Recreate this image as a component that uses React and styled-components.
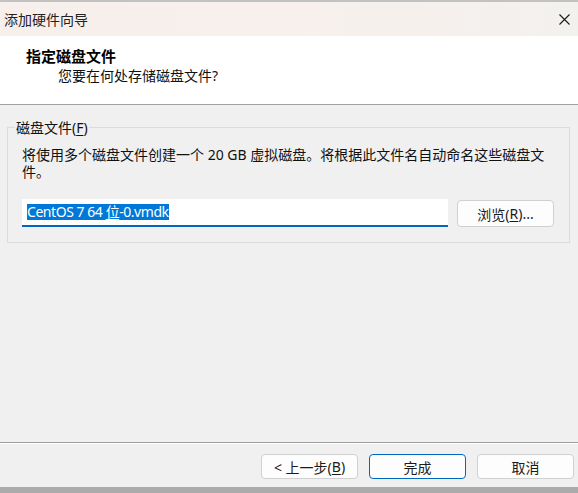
import React from "react";
import styled, { createGlobalStyle } from "styled-components";

const GlobalStyle = createGlobalStyle`
  html, body { margin: 0; padding: 0; }
  body {
    background: #ababab;
    font-family: "Noto Sans", "Noto Sans CJK SC", sans-serif;
    color: #1b1b1b;
  }
`;

const Window = styled.div`
  width: 578px;
  height: 487px;
  box-sizing: border-box;
  display: flex;
  flex-direction: column;
  background: #f0f0f0;
  border-top: 2px solid #c2c2c2;
  box-shadow: 0 2px 0 #b9b9b9;
`;

const TitleBar = styled.div`
  height: 34px;
  flex: none;
  display: flex;
  align-items: center;
  justify-content: space-between;
  padding: 0 8px 0 4px;
  background: linear-gradient(90deg, #f7efeb 0%, #f7f0ec 55%, #f3f1ee 100%);
  font-size: 14px;
  color: #222;
`;

const CloseBtn = styled.div`
  width: 12px;
  height: 12px;
  display: flex;
  align-items: center;
  justify-content: center;
`;

const Header = styled.div`
  height: 69px;
  flex: none;
  box-sizing: border-box;
  background: #ffffff;
  border-bottom: 1px solid #a0a0a0;
  padding: 10px 0 0 26px;
`;

const Heading = styled.div`
  font-family: "Noto Sans CJK SC", sans-serif;
  font-weight: 700;
  font-size: 15px;
  line-height: 20px;
  color: #000;
`;

const SubHeading = styled.div`
  font-size: 14px;
  line-height: 20px;
  margin: 0 0 0 32px;
  color: #111;
`;

const Body = styled.div`
  flex: 1;
  padding: 13px 8px 0 7px;
`;

const Group = styled.fieldset`
  margin: 0;
  padding: 0 14px 15px 14px;
  border: 1px solid #dcdcdc;
  min-width: 0;
`;

const Legend = styled.legend`
  font-size: 14px;
  line-height: 19px;
  padding: 0 1px;
  margin-left: -7px;
  color: #111;
`;

const Key = styled.span`
  text-decoration: underline;
  text-underline-offset: 2px;
`;

const Desc = styled.div`
  font-size: 14px;
  line-height: 17px;
  margin-top: 9px;
  color: #111;
`;

const Row = styled.div`
  display: flex;
  align-items: flex-start;
  gap: 9px;
  margin-top: 19px;
`;

const TextBox = styled.div`
  width: 426px;
  height: 28px;
  box-sizing: border-box;
  background: #ffffff;
  border-bottom: 2px solid #0067c0;
  display: flex;
  align-items: center;
  padding-left: 5px;
`;

const Selected = styled.span`
  background: #0078d7;
  color: #ffffff;
  font-size: 14px;
  letter-spacing: -0.45px;
  line-height: 16px;
  white-space: pre;
`;

const Composed = styled.span`
  text-decoration: underline;
  text-underline-offset: 2px;
`;

const Button = styled.button`
  width: 97px;
  height: ${(p) => (p.$tall ? 25 : 27)}px;
  box-sizing: border-box;
  margin-top: ${(p) => (p.$tall ? 0 : 1)}px;
  border: 1px solid ${(p) => (p.$primary ? "#0067c0" : "#d0d0d0")};
  border-radius: 4px;
  background: #fdfdfd;
  font-family: "Noto Sans", "Noto Sans CJK SC", sans-serif;
  font-size: 14px;
  color: #1b1b1b;
  padding: 0;
  display: flex;
  align-items: center;
  justify-content: center;
`;

const Footer = styled.div`
  height: 45px;
  flex: none;
  box-sizing: border-box;
  border-top: 1px solid #a0a0a0;
  box-shadow: inset 0 1px 0 #ffffff;
  display: flex;
  justify-content: flex-end;
  align-items: flex-start;
  gap: 11px;
  padding: 11px 4px 0 0;
`;

export default function App() {
  return (
    <>
      <GlobalStyle />
      <Window>
        <TitleBar>
          <span>添加硬件向导</span>
          <CloseBtn>
            <svg width="11" height="11" viewBox="0 0 11 11">
              <path d="M0.5 0.5 L10.5 10.5 M10.5 0.5 L0.5 10.5" stroke="#1a1a1a" strokeWidth="1.1" fill="none" />
            </svg>
          </CloseBtn>
        </TitleBar>
        <Header>
          <Heading>指定磁盘文件</Heading>
          <SubHeading>您要在何处存储磁盘文件?</SubHeading>
        </Header>
        <Body>
          <Group>
            <Legend>
              磁盘文件(<Key>F</Key>)
            </Legend>
            <Desc>
              将使用多个磁盘文件创建一个 20 GB 虚拟磁盘。将根据此文件名自动命名这些磁盘文件。
            </Desc>
            <Row>
              <TextBox>
                <Selected>
                  CentOS 7 64 <Composed>位</Composed>-0.vmdk
                </Selected>
              </TextBox>
              <Button>
                浏览(<Key>R</Key>)...
              </Button>
            </Row>
          </Group>
        </Body>
        <Footer>
          <Button $tall>
            &lt; 上一步(<Key>B</Key>)
          </Button>
          <Button $tall $primary>
            完成
          </Button>
          <Button $tall>取消</Button>
        </Footer>
      </Window>
    </>
  );
}
